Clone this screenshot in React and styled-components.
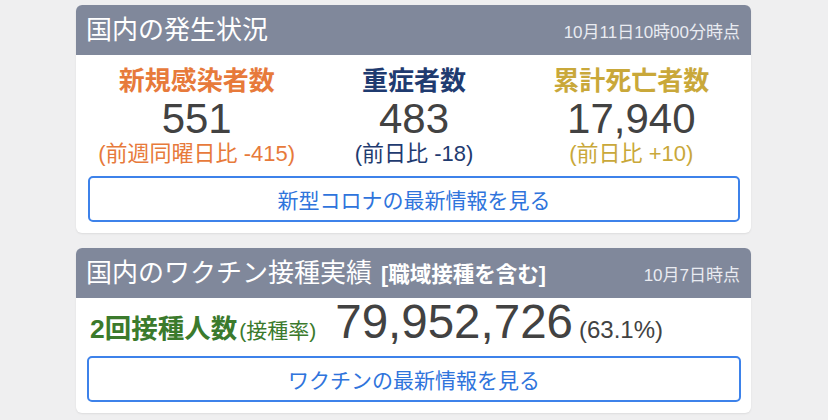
import React from "react";
import styled, { createGlobalStyle } from "styled-components";

const GlobalStyle = createGlobalStyle`
  html, body {
    margin: 0;
    padding: 0;
    background: #efeff0;
  }
  body {
    font-family: "Liberation Sans", "Noto Sans CJK JP", sans-serif;
  }
`;

const Page = styled.div`
  width: 828px;
  height: 420px;
  box-sizing: border-box;
  padding: 5px 0 0 76px;
  display: flex;
  flex-direction: column;
  gap: 15px;
`;

const Card = styled.section`
  width: 675px;
  background: #ffffff;
  border-radius: 6px;
  overflow: hidden;
  box-shadow: 0 1px 2px rgba(0, 0, 0, 0.08);
`;

const Header = styled.header`
  height: 50px;
  background: #80889b;
  display: flex;
  align-items: center;
  justify-content: space-between;
  padding: 0 11px 0 10px;
`;

const Title = styled.h2`
  margin: 0;
  font-size: 26px;
  font-weight: 400;
  color: #ffffff;
  line-height: 1;
  white-space: nowrap;
`;

const TitleNote = styled.span`
  font-size: 21.5px;
  font-weight: 700;
  margin-left: 9px;
`;

const Stamp = styled.span`
  font-size: 17px;
  color: #e9ebf1;
`;

const Body = styled.div`
  padding: ${(p) => p.$pad || "0 11px 11px 12px"};
`;

const Stats = styled.div`
  display: grid;
  grid-template-columns: repeat(3, 1fr);
  padding-top: 11px;
`;

const Stat = styled.div`
  display: flex;
  flex-direction: column;
  align-items: center;
  color: ${(p) => p.$color};
`;

const Label = styled.div`
  font-size: 26px;
  font-weight: 700;
  line-height: 31px;
`;

const Big = styled.div`
  font-size: 42px;
  line-height: 44px;
  color: #424242;
`;

const Diff = styled.div`
  font-size: 22px;
  line-height: 26px;
`;

const MoreButton = styled.a`
  display: flex;
  align-items: center;
  justify-content: center;
  box-sizing: border-box;
  height: 46px;
  margin-top: ${(p) => p.$top || "9px"};
  border: 2px solid #3d82ea;
  border-radius: 5px;
  color: #2f74dc;
  font-size: 21px;
  text-decoration: none;
`;

const VaccineRow = styled.div`
  display: flex;
  align-items: baseline;
  height: 46px;
  line-height: 1;
  padding-left: 3px;
`;

const VaccineLabel = styled.span`
  color: #3b7a2c;
  font-size: 26.5px;
  font-weight: 700;
`;

const VaccineSub = styled.span`
  color: #3b7a2c;
  font-size: 21px;
  margin-left: 2px;
`;

const VaccineNum = styled.span`
  font-size: 47.5px;
  color: #424242;
  margin-left: 19px;
`;

const Rate = styled.span`
  font-size: 24px;
  color: #424242;
  margin-left: 6px;
`;

const stats = [
  { label: "新規感染者数", value: "551", diff: "(前週同曜日比 -415)", color: "#e77a3b" },
  { label: "重症者数", value: "483", diff: "(前日比 -18)", color: "#1f3b70" },
  { label: "累計死亡者数", value: "17,940", diff: "(前日比 +10)", color: "#c9a83a" },
];

export default function App() {
  return (
    <>
      <GlobalStyle />
      <Page>
        <Card>
          <Header>
            <Title>国内の発生状況</Title>
            <Stamp>10月11日10時00分時点</Stamp>
          </Header>
          <Body>
            <Stats>
              {stats.map((s) => (
                <Stat key={s.label} $color={s.color}>
                  <Label>{s.label}</Label>
                  <Big>{s.value}</Big>
                  <Diff>{s.diff}</Diff>
                </Stat>
              ))}
            </Stats>
            <MoreButton href="#">新型コロナの最新情報を見る</MoreButton>
          </Body>
        </Card>
        <Card>
          <Header>
            <Title>
              国内のワクチン接種実績<TitleNote>[職域接種を含む]</TitleNote>
            </Title>
            <Stamp>10月7日時点</Stamp>
          </Header>
          <Body $pad="0 10px 11px 11px">
            <VaccineRow>
              <VaccineLabel>2回接種人数</VaccineLabel>
              <VaccineSub>(接種率)</VaccineSub>
              <VaccineNum>79,952,726</VaccineNum>
              <Rate>(63.1%)</Rate>
            </VaccineRow>
            <MoreButton href="#" $top="12px">ワクチンの最新情報を見る</MoreButton>
          </Body>
        </Card>
      </Page>
    </>
  );
}
